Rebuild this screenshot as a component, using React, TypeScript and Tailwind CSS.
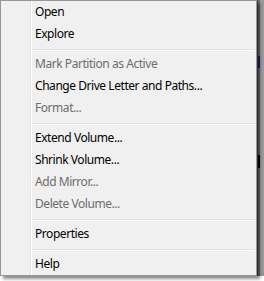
import { Fragment } from 'react';

type Item = { label: string; disabled?: boolean } | 'sep';

const items: Item[] = [
  { label: 'Open' },
  { label: 'Explore' },
  'sep',
  { label: 'Mark Partition as Active', disabled: true },
  { label: 'Change Drive Letter and Paths...' },
  { label: 'Format...', disabled: true },
  'sep',
  { label: 'Extend Volume...' },
  { label: 'Shrink Volume...' },
  { label: 'Add Mirror...', disabled: true },
  { label: 'Delete Volume...', disabled: true },
  'sep',
  { label: 'Properties' },
  'sep',
  { label: 'Help' },
];

const Gutter = () => (
  <div className="w-[30px] shrink-0 self-stretch border-r border-[#e2e3e3]" />
);

const App = () => {
  return (
    <div
      className="flex h-[281px] w-[264px] bg-white"
      style={{ fontFamily: '"Noto Sans", "Open Sans", sans-serif' }}
    >
      <div className="relative z-10 flex h-[276px] w-[257px] shrink-0 flex-col border border-[#979797] bg-[#f0f0f0] shadow-[3px_3px_3px_rgba(0,0,0,0.45)]">
        {items.map((item, i) => (
          <Fragment key={i}>
            {item === 'sep' ? (
              <div className="flex h-[8px]">
                <Gutter />
                <div className="flex-1 border-l border-white pt-[4px] pr-[1px]">
                  <div className="h-[1px] bg-[#e0e0e0]" />
                  <div className="h-[1px] bg-white" />
                </div>
              </div>
            ) : (
              <div className="flex h-[22px]">
                <Gutter />
                <div
                  className={`flex flex-1 items-center border-l border-white pl-[3px] text-[12px] leading-none tracking-[-0.45px] ${
                    item.disabled ? 'text-[#6d6d6d]' : 'text-black'
                  }`}
                >
                  {item.label}
                </div>
              </div>
            )}
          </Fragment>
        ))}
      </div>
      <div className="flex h-[276px] w-[7px] flex-col border-l border-[#505050] bg-[#9a9a9a]">
        <div className="h-[56px] w-[2px] bg-[#6e6e6e]" />
        <div className="h-[12px] w-[2px] bg-[#14237a]" />
        <div className="h-[87px] w-[2px] bg-[#6e6e6e]" />
        <div className="h-[13px] w-[2px] bg-black" />
        <div className="w-[2px] flex-1 bg-[#6e6e6e]" />
      </div>
    </div>
  );
};

export default App;
